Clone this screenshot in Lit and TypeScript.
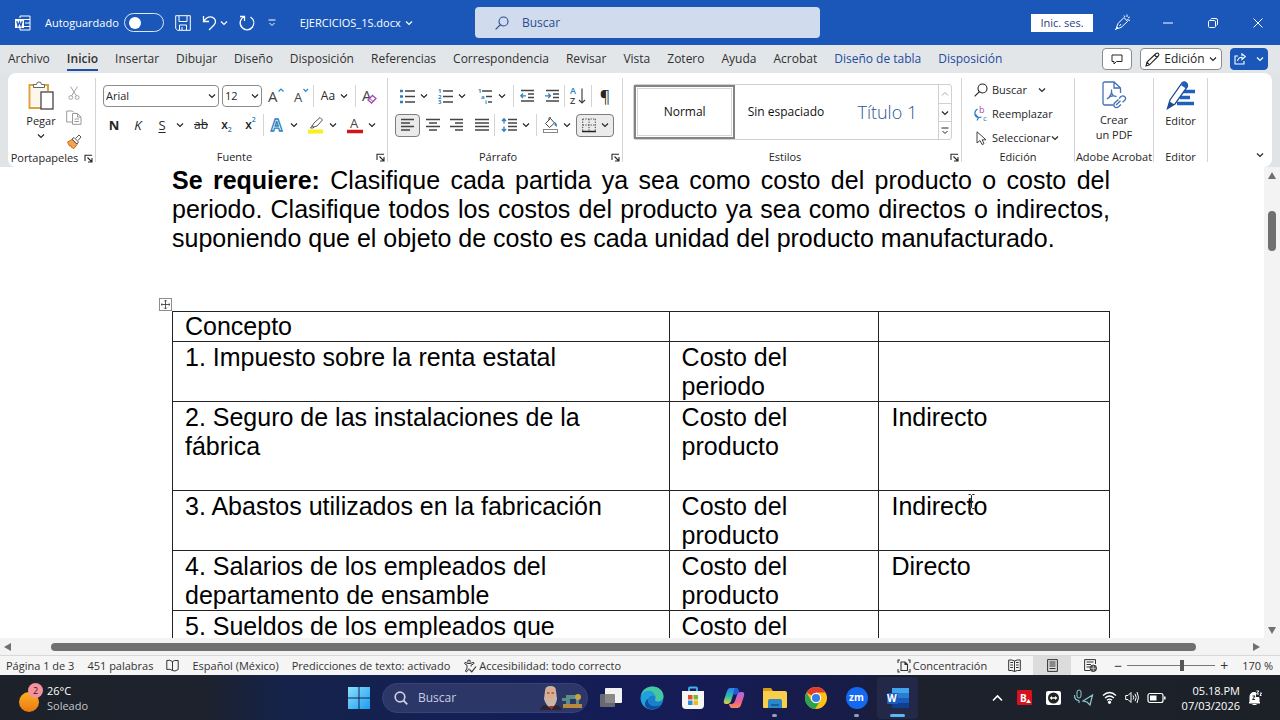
import { LitElement, html, svg, css, nothing } from "lit";
import { customElement } from "lit/decorators.js";
import { classMap } from "lit/directives/class-map.js";

const icon = (w: number, h: number, body: unknown, cls = "") =>
  html`<svg class=${"ic " + cls} width=${w} height=${h} viewBox="0 0 ${w} ${h}" fill="none" stroke="currentColor" aria-hidden="true">${body}</svg>`;

const chev = () => icon(8, 6, svg`<path d="M1 1.5 4 4.5 7 1.5" stroke-width="1.2"/>`);
const launcher = () =>
  icon(9, 9, svg`<path d="M1 7V1.200H8M3.500 3.500 7.500 7.500M8 4V8H4" stroke-width="1.100"/>`);

const lines = (ys: number[][]) => svg`${ys.map(([x1, x2, y]) => svg`<path d=${`M${x1} ${y}H${x2}`} stroke="#444" stroke-width="1.300"/>`)}`;

const I = {
  word: () => icon(16, 16, svg`<path d="M5 3V1H15V15H5V13M9 4.500H15M10 8H15M9 11.500H15"/><rect x="0" y="4" width="9" height="9" fill="#fff" stroke="none"/><path d="M1.800 6 3 11 4.500 7 6 11 7.200 6" stroke="#1a57b8" stroke-width="1.200"/>`),
  save: () => icon(16, 16, svg`<path d="M.7.7H15.300V15.300H2.500L.7 13.500ZM4 1V6.500H12V1M4.500 15V10H11.500V15M7 12V15"/>`),
  undo: () => icon(15, 16, svg`<path d="M1.500 1V6.500H7M1.500 6.500C4 3 7 1.200 10 2.200 14 3.600 14.500 7.500 12 10L7 15" stroke-width="1.300"/>`),
  redo: () => icon(16, 16, svg`<path d="M1 1.500H5.500V6M5.500 1.500C1 3.500-.3 9 3 12.500 6 15.800 11 15.500 13.500 12 15.800 8.500 15 4.500 11.500 2" stroke-width="1.300"/>`),
  custom: () => icon(8, 8, svg`<path d="M.5 1H7.500M1.500 4 4 6.500 6.500 4"/>`),
  search: () => icon(14, 14, svg`<circle cx="8.500" cy="5.500" r="4.500" stroke-width="1.100"/><path d="M5.200 8.800.6 13.400" stroke-width="1.200"/>`),
  pen: () => icon(17, 17, svg`<path d="M2 15 4 9.500 10 3.500 13.500 7.500 7 13.500ZM1 16 4 13M7 10 5.500 12M10 1.500 11 3M13 .5V3M15.800 3 14 4M13 5.500 16 6.500"/>`),
  min: () => icon(10, 10, svg`<path d="M0 5H10"/>`),
  restore: () => icon(10, 10, svg`<rect x=".5" y="2.500" width="7" height="7" rx="1.200"/><path d="M2.500 1.500Q3 .5 4 .5H8Q9.500.5 9.500 2V6Q9.500 7 8.500 7.500"/>`),
  close: () => icon(10, 10, svg`<path d="M.5.5 9.500 9.500M9.500.5.5 9.500"/>`),
  comment: () => icon(12, 11, svg`<path d="M1 1H11V7.500H5.500L3 10V7.500H1Z"/>`),
  pencil: () => icon(15, 15, svg`<path d="M1 14 2 10 11 1.500Q12.500.5 13.500 1.600 14.500 2.700 13.300 4L4.500 12.800ZM9.500 3 12 5.500M2 10 4.500 12.800" stroke-width="1.100"/>`),
  share: () => icon(12, 12, svg`<path d="M4 3H1V11H10V8M3.500 8C4 5.500 5.500 4.200 8 4.200V6.500L11.300 3.500 8 .8V3" stroke-width="1.100"/>`),
  paste: () => icon(26, 29, svg`<path d="M6 4H1.500V27H13M16 4H20V10" stroke="#e0a03c" stroke-width="2"/><path d="M3 6V25H12V11H19V6Z" fill="#fdf6ea" stroke="none"/><path d="M5.500 6.500V3.500H8.500Q8.500 1 11 1T13.500 3.500H16.500V6.500Z" fill="#fff" stroke="#666"/><rect x="13" y="11" width="12" height="17" fill="#fff" stroke="#444" stroke-width="1.300"/>`),
  cut: () => icon(12, 14, svg`<g stroke="#a3a3a3"><path d="M2.500.5 8.500 10M9.500.5 3.500 10"/><circle cx="2.800" cy="11.500" r="1.900"/><circle cx="9.200" cy="11.500" r="1.900"/></g>`),
  copy: () => icon(16, 15, svg`<g stroke="#9a9a9a"><path d="M6 12H.7V1H6.500L8 2.500"/><path d="M6.500 3.500H11.500L15 7V14.300H6.500ZM11.500 3.500V7H15M8.500 9H13M8.500 11.500H13"/></g>`),
  brush: () => icon(16, 15, svg`<path d="M1.500 8 6 5.500 11 10.500 8 14.500 5.500 13.500 5 11.500 3.500 12Z" fill="#f4a44c" stroke="#c96f1b"/><path d="M6 5 8 3.500 12.500 8 11 10ZM9.500 4.500 13 1 15 3 12 6.500" fill="#fff" stroke="#555"/>`),
  grow: () => icon(16, 18, svg`<text x="0" y="15" class="g16">A</text><path d="M10.500 4.500 13 2 15.500 4.500" stroke="#2b88c9" stroke-width="1.200"/>`),
  shrink: () => icon(16, 18, svg`<text x="1" y="15" class="g14">A</text><path d="M10.500 2 12.700 4.300 14.900 2" stroke="#2b88c9" stroke-width="1.200"/>`),
  clear: () => icon(16, 18, svg`<text x="1" y="14" class="g16">A</text><path d="M7 13 11.500 8.500 15 11.500 10.500 16Z" fill="#fff" stroke="#a24bb5" stroke-width="1.300"/><path d="M8.800 11.500 12 14.500" stroke="#a24bb5"/>`),
  effects: () => icon(16, 18, svg`<text x="2" y="15" class="gfx">A</text>`),
  marker: () => icon(16, 18, svg`<path d="M4 10 6 7 12 1.500 14.500 4 9 10 6 11ZM4 10 2.500 12H5L6 11" fill="#fff" stroke="#555"/><path d="M0 15.500H15" stroke="#f7f01b" stroke-width="4"/>`),
  fcolor: () => icon(16, 18, svg`<text x="3" y="12" class="g14">A</text><path d="M0 15.500H16" stroke="#d01616" stroke-width="3.600"/>`),
  bullets: () => icon(15, 16, svg`<path d="M0 3H3M0 8.500H3M0 14H3" stroke="#2b7fc0" stroke-width="2.600"/>${lines([[5, 15, 3], [5, 15, 8.5], [5, 15, 14]])}`),
  numbers: () => icon(15, 16, svg`<text x="0" y="5" class="g6">1</text><text x="0" y="10.500" class="g6">2</text><text x="0" y="16" class="g6">3</text>${lines([[5, 15, 3], [5, 15, 8.5], [5, 15, 14]])}`),
  multi: () => icon(15, 16, svg`<text x="0" y="5" class="g6">1</text><text x="3" y="10.500" class="g6">a</text><text x="7" y="16" class="g6">i</text>${lines([[4, 14, 3], [8, 14, 8.5], [10, 14, 14]])}`),
  outdent: () => icon(14, 14, svg`${lines([[1, 14, 1.5], [8, 14, 5], [8, 14, 8.5], [1, 14, 12]])}<path d="M6 6.800H.8M3 4.500.8 6.800 3 9" stroke="#2b7fc0" stroke-width="1.200"/>`),
  indent: () => icon(14, 14, svg`${lines([[1, 14, 1.5], [8, 14, 5], [8, 14, 8.5], [1, 14, 12]])}<path d="M0 6.800H5.500M3.300 4.500 5.500 6.800 3.300 9" stroke="#2b7fc0" stroke-width="1.200"/>`),
  sort: () => icon(16, 18, svg`<text x="0" y="7" class="gblue">A</text><text x="0" y="17" class="gdark">Z</text><path d="M12 1.500V16M9 13 12 16 15 13" stroke="#444" stroke-width="1.200"/>`),
  left: () => icon(14, 14, lines([[0, 13, 1.5], [0, 9, 5], [0, 13, 8.5], [0, 9, 12]])),
  center: () => icon(14, 14, lines([[0, 14, 1.5], [3, 11, 5], [0, 14, 8.5], [3, 11, 12]])),
  right: () => icon(14, 14, lines([[0, 13, 1.5], [5, 13, 5], [0, 13, 8.5], [5, 13, 12]])),
  just: () => icon(14, 14, lines([[0, 14, 1.5], [0, 14, 5], [0, 14, 8.5], [0, 14, 12]])),
  spacing: () => icon(16, 14, svg`<path d="M3 .8V5.500M1 3 3 .8 5 3M3 8.500V13.200M1 11 3 13.200 5 11" stroke="#2b7fc0" stroke-width="1.300"/>${lines([[7, 16, 1.5], [7, 16, 5], [7, 16, 8.5], [7, 16, 12]])}`),
  bucket: () => icon(15, 16, svg`<path d="M2.500 6.500 7.500 1.500 11.500 6 6.500 10.500ZM6 3V.8H8" stroke="#444"/><path d="M11.500 5Q14.500 6 13.800 10L11.500 8Z" fill="#2b7fc0" stroke="none"/><rect x=".5" y="12.500" width="14" height="3" stroke="#888" fill="#fff"/>`),
  borders: () => icon(14, 15, svg`<path d="M.7 1H14M.7 7H14M.7 1V13M7 1V13M13.300 1V13" stroke="#444" stroke-dasharray="1.300 1.300"/><path d="M0 13.500H14" stroke="#222" stroke-width="1.600"/>`),
  replace: () => icon(14, 16, svg`<text x="5" y="7" class="gpur">b</text><text x="9" y="15" class="gcy">c</text><path d="M3.500 3C0 5 0 10 3.500 11.500M1.500 8.500 4.500 11.600 7.500 11M4.500 11.600 3 14.500" stroke="#2b7fc0" stroke-width="1.200"/>`),
  select: () => icon(14, 14, svg`<path d="M3 .8V12L6 9.500 8 13.500 10 12.700 8.200 8.800H12Z" stroke="#444"/>`),
  pdf: () => icon(26, 28, svg`<g stroke="#4272b8" stroke-width="1.300"><path d="M12 24H4Q2 24 2 22V3Q2 1 4 1H13L19.500 7V12M13 1V7H19.500"/><path d="M6 18C9 16 11 12 10.500 8.500M10.500 11C11 14 13 15.500 15.500 15.500M7 17C9.500 15 13 14.500 15.500 15.500"/><path d="M18 17.500 20 15.500Q22 14 23.800 15.800T23.500 19.500L21.500 21.300M19.500 19.800 15 24M17.500 18.500 14 21.500Q11.800 23.800 13.500 25.800 15.500 27.500 17.800 25.500L20 23.500"/></g>`),
  editor: () => icon(30, 29, svg`<path d="M17 10.500H29M14 16.500H24M11 22.500H28" stroke="#1f5fbf" stroke-width="3.600"/><path d="M1.500 27.500 4 19 16 2Q18 .2 20 1.500T21.500 5.500L9 23Z" fill="#fff" stroke="#1c4c94" stroke-width="1.300"/><path d="M1.500 27.500 3.500 20.500 8.500 23.500Z" fill="#1c4c94" stroke="none"/><path d="M16.500 2Q18 .2 20 1.500T21.500 5.500L20 7.500 15 4.200Z" fill="#1f5fbf" stroke="none"/>`),
  move: () => icon(13, 13, svg`<rect x=".5" y=".5" width="12" height="12" fill="#fff" stroke="#8d8d8d"/><path d="M6.500 2V11M2 6.500H11M5.300 3.300 6.500 2 7.700 3.300M5.300 9.700 6.500 11 7.700 9.700M3.300 5.300 2 6.500 3.300 7.700M9.700 5.300 11 6.500 9.700 7.700" stroke="#444" stroke-width=".9"/>`),
  beam: () => icon(7, 15, svg`<path d="M.5.500H2.500L3.500 1.500 4.500.5H6.500M3.500 1.500V13.500M.5 14.500H2.500L3.500 13.500 4.500 14.500H6.500" stroke="#222"/>`),
  book: () => icon(13, 13, svg`<path d="M6.500 2.500Q4 .5.800 1.500V10.500Q4 9.500 6.500 11.500V2.500Q8 1 12.200 1.500V10.500L9 12 6.500 11.500"/>`),
  access: () => icon(14, 14, svg`<path d="M5 3.500Q4 1 6 1T7 3.500M2 5Q1 4 2.200 3.300L5 4.500H7L10.500 3.300Q11.700 4 10.500 5L8 6.200V7.500M2 5 4 6.200V9L2.500 12Q3 13.500 4 12.500L6 9.500"/><path d="M6.500 10.500 8.800 12.800 13 7.500" stroke-width="1.200"/>`),
  focus: () => icon(14, 14, svg`<path d="M3 1H1V4M1 10V13H3M11 1H13V4M13 10V13H11M4 3H8L10.500 5.500V11.500H4ZM8 3V5.500H10.500" stroke-width="1.100"/>`),
  read: () => icon(13, 13, svg`<path d="M6.500 2Q4 .5.700 1V11.500Q4 11 6.500 12.500 9 11 12.300 11.500V1Q9 .5 6.500 2V12.500M2.300 3.500H5M2.300 6H5M2.300 8.500H5M8 3.500H10.700M8 6H10.700M8 8.500H10.700"/>`),
  print: () => icon(11, 13, svg`<path d="M.6.6H10.400V12.400H.6ZM2.500 3H8.500M2.500 5H8.500M2.500 7H8.500M2.500 9.500H8.500"/>`),
  web: () => icon(13, 13, svg`<path d="M6 11.500H.6V.6H11.500V5M2.500 3H9.500M2.500 5.500H7M2.500 8H6"/><circle cx="9.300" cy="9.300" r="3.200" fill="#555"/><path d="M9.300 6.500V12M6.500 9.300H12" stroke="#ddd" stroke-width=".7"/>`),
};

@customElement("app-root")
export class AppRoot extends LitElement {
  static styles = css`
    :host { display: flex; flex-direction: column; height: 100vh; overflow: hidden; font-family: "Open Sans", "Noto Sans", sans-serif; font-size: 12px; line-height: 16px; color: #262626; background: #fff; }
    * { box-sizing: border-box; }
    button { font: inherit; color: inherit; background: none; border: 0; padding: 0; margin: 0; display: flex; align-items: center; justify-content: center; white-space: nowrap; }
    a { color: inherit; text-decoration: none; }
    .ic { display: block; flex: none; overflow: visible; }
    svg text { stroke: none; fill: #444; font-family: "Open Sans", sans-serif; }
    svg .g16 { font-size: 15px; } svg .g14 { font-size: 13px; }
    svg .gfx { font-size: 16px; font-weight: 700; fill: #fff; stroke: #2b7fc0; stroke-width: 1.300px; }
    svg .g6 { font-size: 6px; font-weight: 700; fill: #2b7fc0; }
    svg .gblue { font-size: 9px; font-weight: 600; fill: #2b7fc0; }
    svg .gdark { font-size: 9px; font-weight: 600; }
    svg .gpur { font-size: 9px; fill: #a24bb5; } svg .gcy { font-size: 8px; fill: #2b7fc0; }

    .title { flex: none; height: 45px; display: grid; grid-template-columns: 475px minmax(120px, 345px) 1fr; align-items: center; background: #1a57b8; color: #fff; }
    .quick { display: flex; align-items: center; gap: 11px; padding-left: 15px; }
    .auto { display: flex; align-items: center; gap: 5px; font-size: 11px; font-weight: 500; padding-left: 3px; }
    .toggle { appearance: none; margin: 0; width: 40px; height: 19px; border: 1px solid #dce7f7; border-radius: 10px; display: flex; align-items: center; padding-left: 4px; }
    .toggle::before { content: ""; width: 12px; height: 12px; border-radius: 50%; background: #fff; }
    .undo { gap: 3px; }
    .more { width: 12px; }
    .file { gap: 4px; padding-left: 11px; font-size: 11px; }
    .find { display: flex; align-items: center; height: 31px; gap: 13px; padding-left: 20px; border-radius: 4px; background: #d0dcee; color: #2c4b8e; }
    .find input { flex: 1; min-width: 0; border: 0; background: none; padding: 0; font: inherit; color: inherit; outline: 0; }
    .find input::placeholder, .tsearch input::placeholder { color: inherit; opacity: 1; }
    .wins { display: flex; align-items: center; justify-content: flex-end; }
    .sign { width: 62px; height: 18px; background: #fff; color: #1d3f86; font-size: 11px; margin-right: 7px; }
    .wins .w { width: 45px; height: 32px; }

    .tabs { flex: none; height: 28px; display: flex; align-items: center; gap: 17px; padding: 0 12px 0 8px; background: #e3e6e9; color: #303030; }
    .tabs a { line-height: 20px; border-bottom: 2px solid transparent; margin-top: 2px; white-space: nowrap; }
    .tabs a.on { font-weight: 600; border-color: #1f4fa6; }
    .tabs a.ctx { color: #234a9c; }
    .acts { margin-left: auto; display: flex; gap: 8px; }
    .acts button { height: 22px; border: 1px solid #8b8b8b; border-radius: 4px; background: #fff; color: #262626; }
    .acts .c { width: 30px; } .acts .e { width: 82px; gap: 4px; } 
    .acts .s { width: 38px; gap: 10px; background: #1a57b8; border-color: #1a57b8; color: #fff; }

    .band { flex: none; background: #e0e4e7; padding: 0 8px; }
    .ribbon { height: 94px; display: flex; background: #fff; border-radius: 8px; padding: 5px 0; overflow: hidden; }
    .grp { flex: none; display: flex; flex-direction: column; justify-content: space-between; height: 84px; border-right: 1px solid #d4d4d4; font-size: 11px; }
    .foot { display: flex; align-items: center; height: 10px; font-size: 11px; line-height: 14px; }
    .foot span { flex: 1; text-align: center; white-space: nowrap; }
    .foot button { width: 14px; }
    .clip { width: 88px; } .font { width: 292px; } .para { width: 235px; } .sty { width: 339px; } .edit { width: 113px; } .adobe { width: 79px; } .edr { width: 54px; }
    .clipbody { display: grid; grid-template-columns: 52px 14px; padding: 3px 0 0 7px; }
    .big { flex-direction: column; justify-content: flex-start; line-height: 15px; white-space: normal; }
    .big .lab { margin-top: 3px; }
    .big .ic + .lab + .ic { margin-top: 5px; }
    .stack button { height: 24px; width: 100%; }
    .rows { display: grid; row-gap: 5px; padding: 6px 0 0 7px; }
    .row { display: grid; height: 24px; align-items: center; }
    .row button { height: 24px; gap: 5px; }
    .f1 { grid-template-columns: 119px 41px 26px 24px 1px 41px 1px 26px; }
    .f2 { grid-template-columns: 22px 26px 22px 14px 28px 23px 25px 1px 39px 39px 39px; font-size: 13px; }
    .row .aa { font-size: 12px; }
    .p1 { grid-template-columns: 38px 38px 42px 1px 25px 25px 1px 26px 1px 26px; }
    .p2 { grid-template-columns: 25px 25px 24px 25px 1px 41px 1px 39px 38px; }
    .sep { height: 22px; background: #d4d4d4; }
    .combo { display: grid; grid-template-columns: 1fr; align-items: center; margin-right: 3px; }
    .combo.sz { margin-right: 1px; }
    .combo select, .combo .ic { grid-area: 1 / 1; }
    .combo .ic { justify-self: end; margin-right: 3px; pointer-events: none; }
    .combo select { appearance: none; width: 100%; height: 22px; border: 1px solid #8b8b8b; border-radius: 4px; background: #fff; font: inherit; color: inherit; padding: 0 2px; }
    .row button.on { border: 1px solid #7d7d7d; border-radius: 4px; background: #ebebeb; height: 23px; }
    .row .p-mark { font-size: 16px; }
    .b { font-weight: 700; } .i { font-style: italic; } .u { text-decoration: underline; text-underline-offset: 2px; } .row .st { text-decoration: line-through; font-size: 12px; }
    .row .xs { gap: 0; font-weight: 600; font-size: 12px; }
    .xs small { font-size: 7px; color: #2b7fc0; line-height: 8px; align-self: flex-end; padding-bottom: 3px; }
    .xs small.up { align-self: flex-start; padding: 3px 0 0; }
    .gal { display: grid; grid-template-columns: repeat(3, 1fr) 13px; height: 56px; margin: 6px 9px 0 10px; border: 1px solid #d0d0d0; border-radius: 3px; font-size: 12px; }
    .gal > button { height: 100%; color: #111; }
    .gal > button.on { border: 2px solid #848484; outline: 1px solid #d6d6d6; outline-offset: -4px; }
    .gal > button.h1 { font-weight: 300; font-size: 18px; color: #2b5596; }
    .gal .scr { display: grid; grid-template-rows: repeat(3, 1fr); border-left: 1px solid #d0d0d0; }
    .scr button + button { border-top: 1px solid #d0d0d0; }
    .scr .dim { color: #aaa; }
    .eds { padding: 0 0 0 12px; }
    .eds button { height: 24px; gap: 4px; }
    .eds .gap { gap: 11px; } .eds .gap span { margin-left: -7px; }
    .eds .near { gap: 1px; } .eds .near span { margin-left: 3px; }
    .tall { padding-top: 3px; display: flex; justify-content: center; }
    .fold { margin: auto 8px 4px auto; }

    .work { flex: 1; min-height: 0; display: grid; grid-template-columns: minmax(0, 1fr) 16px; }
    .doc { overflow: hidden; padding: 0 154px 0 172px; font: 25px/29px "Liberation Sans", Arial, sans-serif; color: #000; }
    .page { position: relative; margin-top: -1px; }
    .page p { margin: 0 0 58px; text-align: justify; }
    table { width: 100%; border-collapse: collapse; table-layout: fixed; }
    .c1 { width: 53%; } .c2 { width: 22.400%; }
    th, td { border: 1px solid #222; padding: 1px 8px 0 12px; text-align: left; vertical-align: top; font-weight: 400; height: 30px; }
    th { padding-top: 0; }
    .tall-row td { height: 89px; }
    .handle { position: absolute; left: -13px; top: 132px; }
    .beam { position: absolute; left: 796px; top: 328px; }
    .vs { display: flex; flex-direction: column; align-items: center; justify-content: space-between; padding: 5px 0 4px; background: #f3f3f3; color: #707070; }
    .vs i { width: 8px; height: 40px; border-radius: 4px; background: #707070; margin: 32px 0 auto; }
    .tri path, .tri { fill: #707070; stroke: none; }
    .hs { flex: none; height: 17px; display: flex; align-items: center; justify-content: space-between; padding: 0 20px 0 4px; background: #f3f3f3; }
    .hs i { flex: 1; height: 8px; border-radius: 4px; background: #707070; margin: 0 56px 0 39px; }

    .status { flex: none; height: 20px; display: flex; align-items: center; justify-content: space-between; background: #f5f5f5; border-top: 1px solid #d8d8d8; font-size: 11px; color: #333; padding: 0 7px 0 6px; }
    .status div { display: flex; align-items: center; height: 100%; }
    .sl { gap: 13px; } .sl button, .sr .fo { gap: 2px; }
    .sr .fo { margin-right: 8px; }
    .sr .v { width: 38px; height: 100%; }
    .sr .v.on { background: #dcdcdc; }
    .sr .z { width: 18px; font-size: 14px; }
    .sr input { appearance: none; width: 88px; height: 14px; margin: 0; background: linear-gradient(#777, #777) center / 100% 1px no-repeat; }
    .sr input::-webkit-slider-thumb { appearance: none; width: 4px; height: 11px; background: #555; }
    .pct { margin-left: 9px; white-space: nowrap; }

    .task { flex: none; height: 45px; display: grid; grid-template-columns: 340px auto 1fr; align-items: center; color: #fff; background: linear-gradient(90deg, #1d2129 0, #1d222d 16%, #15234a 22%, #141f56 38%, #161b55 55%, #171c48 66%, #1c212c 72%, #1c2128); }
    .weather { display: flex; align-items: center; gap: 4px; padding-left: 19px; font-size: 11px; line-height: 15px; }
    .weather span { color: #c3c6cc; }
    .apps { display: flex; align-items: center; }
    .apps button { position: relative; width: 41px; height: 42px; }
    .apps .start { width: 38px; }
    .apps .tv { margin-left: 2px; }
    .tsearch { width: 206px; height: 30px; margin: 0 0 0 4px; display: flex; align-items: center; gap: 10px; padding: 0 5px 0 11px; border-radius: 15px; background: #2c3768; border: 1px solid #37427a; color: #c9cde0; }
    .tsearch input { flex: 1; min-width: 0; border: 0; background: none; font: inherit; color: inherit; padding: 0; outline: 0; }
    .apps .run::after { content: ""; position: absolute; bottom: 2px; width: 5px; height: 3px; border-radius: 2px; background: #9a9db5; }
    .apps .act { background: #232848; border-radius: 4px; }
    .apps .act::after { width: 15px; background: #5cb8f0; }
    .tray { display: flex; align-items: center; justify-content: flex-end; gap: 8px; padding-right: 18px; }
    .tray .up { margin-right: 6px; }
    .clock { text-align: right; font-size: 11px; line-height: 15px; margin-left: 8px; }
    svg text.wt { fill: #fff; font-weight: 700; font-size: 10px; }
    svg text.dk { fill: #222; font-size: 9px; }
  `;

  private tabs = ["Archivo", "Inicio", "Insertar", "Dibujar", "Diseño", "Disposición", "Referencias", "Correspondencia", "Revisar", "Vista", "Zotero", "Ayuda", "Acrobat", "Diseño de tabla", "Disposición"];
  private rows = [
    ["1. Impuesto sobre la renta estatal", "Costo del periodo", ""],
    ["2. Seguro de las instalaciones de la fábrica", "Costo del producto", "Indirecto"],
    ["3. Abastos utilizados en la fabricación", "Costo del producto", "Indirecto"],
    ["4. Salarios de los empleados del departamento de ensamble", "Costo del producto", "Directo"],
    ["5. Sueldos de los empleados que", "Costo del", ""],
  ];

  private btn(label: string, body: unknown, cls = "") {
    return html`<button class=${cls} aria-label=${label}>${body}</button>`;
  }
  private split(label: string, body: unknown, cls = "") {
    return html`<button class=${cls} aria-label=${label}>${body}${chev()}</button>`;
  }
  private foot(label: string, more = true) {
    return html`<div class="foot"><span>${label}</span>${more ? html`<button aria-label=${"Más opciones de " + label}>${launcher()}</button>` : nothing}</div>`;
  }

  private renderTitle() {
    return html`<header class="title">
      <div class="quick">
        ${I.word()}
        <label class="auto">Autoguardado <input class="toggle" type="checkbox"></label>
        ${this.btn("Guardar", I.save())}
        ${this.split("Deshacer", I.undo(), "undo")}
        ${this.btn("Rehacer", I.redo())}
        ${this.btn("Personalizar", I.custom(), "more")}
        <button class="file">EJERCICIOS_1S.docx ${chev()}</button>
      </div>
      <label class="find">${I.search()}<input type="search" placeholder="Buscar" aria-label="Buscar"></label>
      <div class="wins">
        <button class="sign">Inic. ses.</button>
        ${this.btn("Lápiz", I.pen(), "w")}${this.btn("Minimizar", I.min(), "w")}${this.btn("Restaurar", I.restore(), "w")}${this.btn("Cerrar", I.close(), "w")}
      </div>
    </header>`;
  }

  private renderTabs() {
    return html`<nav class="tabs">
      ${this.tabs.map((t, i) => html`<a href="#" class=${classMap({ on: i === 1, ctx: i > 12 })}>${t}</a>`)}
      <div class="acts">
        ${this.btn("Comentarios", I.comment(), "c")}
        <button class="e">${I.pencil()}Edición${chev()}</button>
        ${this.split("Compartir", I.share(), "s")}
      </div>
    </nav>`;
  }

  private renderRibbon() {
    const sep = html`<i class="sep"></i>`;
    return html`<div class="band"><div class="ribbon">
      <section class="grp clip">
        <div class="clipbody">
          <button class="big">${I.paste()}<span class="lab">Pegar</span>${chev()}</button>
          <div class="stack">${this.btn("Cortar", I.cut())}${this.btn("Copiar", I.copy())}${this.btn("Copiar formato", I.brush())}</div>
        </div>
        ${this.foot("Portapapeles")}
      </section>
      <section class="grp font">
        <div class="rows">
          <div class="row f1">
            <label class="combo"><select aria-label="Fuente"><option>Arial</option></select>${chev()}</label>
            <label class="combo sz"><select aria-label="Tamaño de fuente"><option>12</option></select>${chev()}</label>
            ${this.btn("Aumentar", I.grow())}${this.btn("Disminuir", I.shrink())}${sep}
            <button class="aa">Aa${chev()}</button>${sep}
            ${this.btn("Borrar formato", I.clear())}
          </div>
          <div class="row f2">
            <button class="b">N</button><button class="i">K</button><button class="u">S</button>${this.btn("Subrayado", chev())}
            <button class="st">ab</button>
            <button class="xs">x<small>2</small></button><button class="xs">x<small class="up">2</small></button>${sep}
            ${this.split("Efectos", I.effects())}${this.split("Resaltado", I.marker())}${this.split("Color", I.fcolor())}
          </div>
        </div>
        ${this.foot("Fuente")}
      </section>
      <section class="grp para">
        <div class="rows">
          <div class="row p1">
            ${this.split("Viñetas", I.bullets())}${this.split("Numeración", I.numbers())}${this.split("Multinivel", I.multi())}${sep}
            ${this.btn("Disminuir sangría", I.outdent())}${this.btn("Aumentar sangría", I.indent())}${sep}
            ${this.btn("Ordenar", I.sort())}${sep}<button class="p-mark">¶</button>
          </div>
          <div class="row p2">
            ${this.btn("Izquierda", I.left(), "on")}${this.btn("Centrar", I.center())}${this.btn("Derecha", I.right())}${this.btn("Justificar", I.just())}${sep}
            ${this.split("Espaciado", I.spacing())}${sep}${this.split("Sombreado", I.bucket())}${this.split("Bordes", I.borders(), "on")}
          </div>
        </div>
        ${this.foot("Párrafo")}
      </section>
      <section class="grp sty">
        <div class="gal">
          <button class="on">Normal</button><button>Sin espaciado</button><button class="h1">Título 1</button>
          <div class="scr">
            ${this.btn("Subir", icon(8, 6, svg`<path d="M1 4.500 4 1.500 7 4.500"/>`), "dim")}${this.btn("Bajar", chev())}${this.btn("Más", I.custom())}
          </div>
        </div>
        ${this.foot("Estilos")}
      </section>
      <section class="grp edit">
        <div class="eds">
          <button class="gap">${I.search()}<span>Buscar</span>${chev()}</button>
          <button>${I.replace()}Reemplazar</button>
          <button class="near">${I.select()}<span>Seleccionar</span>${chev()}</button>
        </div>
        ${this.foot("Edición", false)}
      </section>
      <section class="grp adobe">
        <div class="tall"><button class="big">${I.pdf()}<span class="lab">Crear<br>un PDF</span></button></div>
        ${this.foot("Adobe Acrobat", false)}
      </section>
      <section class="grp edr">
        <div class="tall"><button class="big">${I.editor()}<span class="lab">Editor</span></button></div>
        ${this.foot("Editor", false)}
      </section>
      ${this.btn("Contraer la cinta", chev(), "fold")}
    </div></div>`;
  }

  private renderDoc() {
    return html`<main class="work">
      <div class="doc"><div class="page">
        <p><b>Se requiere:</b> Clasifique cada partida ya sea como costo del producto o costo del periodo. Clasifique todos los costos del producto ya sea como directos o indirectos, suponiendo que el objeto de costo es cada unidad del producto manufacturado.</p>
        <table>
          <colgroup><col class="c1"><col class="c2"><col></colgroup>
          <thead><tr><th>Concepto</th><th></th><th></th></tr></thead>
          <tbody>${this.rows.map((r, i) => html`<tr class=${classMap({ "tall-row": i === 1 })}>${r.map((c) => html`<td>${c}</td>`)}</tr>`)}</tbody>
        </table>
        <span class="handle">${I.move()}</span><span class="beam">${I.beam()}</span>
      </div></div>
      <div class="vs">${icon(8, 7, svg`<path d="M4 0 8 7H0Z"/>`, "tri")}<i></i>${icon(8, 7, svg`<path d="M0 0H8L4 7Z"/>`, "tri")}</div>
    </main>
    <div class="hs">${icon(8, 8, svg`<path d="M0 4 7 0V8Z"/>`, "tri")}<i></i>${icon(8, 8, svg`<path d="M8 4 1 0V8Z"/>`, "tri")}</div>`;
  }

  private renderStatus() {
    return html`<footer class="status">
      <div class="sl">
        <span>Página 1 de 3</span><span>451 palabras</span>${this.btn("Revisión", I.book())}<span>Español (México)</span><span>Predicciones de texto: activado</span>
        <button>${I.access()}Accesibilidad: todo correcto</button>
      </div>
      <div class="sr">
        <button class="fo">${I.focus()}Concentración</button>
        ${this.btn("Lectura", I.read(), "v")}${this.btn("Impresión", I.print(), "v on")}${this.btn("Web", I.web(), "v")}
        <button class="z">−</button><input type="range" min="0" max="100" value="63" aria-label="Zoom"><button class="z">+</button>
        <span class="pct">170 %</span>
      </div>
    </footer>`;
  }

  private renderTask() {
    return html`<div class="task">
      <div class="weather">
        ${icon(24, 34, svg`<defs><linearGradient id="sun" x2="0" y2="1"><stop stop-color="#fbb024"/><stop offset="1" stop-color="#ec7811"/></linearGradient></defs><circle cx="10" cy="21" r="10" fill="url(#sun)" stroke="none"/><circle cx="16.500" cy="9.500" r="7.500" fill="#f9919c" stroke="none"/><text x="14" y="13" class="dk">2</text>`)}
        <div>26°C<br><span>Soleado</span></div>
      </div>
      <div class="apps">
        ${this.btn("Inicio", icon(22, 22, svg`<g stroke="none"><defs><linearGradient id="win" x2="1" y2="1"><stop stop-color="#8ce0fd"/><stop offset="1" stop-color="#1a9cf0"/></linearGradient></defs><path fill="url(#win)" d="M0 0H10.500V10.500H0ZM11.500 0H22V10.500H11.500ZM0 11.500H10.500V22H0ZM11.500 11.500H22V22H11.500Z"/></g>`), "start")}
        <label class="tsearch">
          ${icon(14, 14, svg`<circle cx="6" cy="6" r="4.800" stroke-width="1.700"/><path d="M9.500 9.500 13.300 13.300" stroke-width="1.800"/>`)}
          <input placeholder="Buscar" aria-label="Buscar en Windows">
          ${icon(44, 26, svg`<g stroke="none"><path d="M2 25Q3 20 9 20H16Q22 20 24 25Z" fill="#2b2533"/><path d="M7 6Q7 1 12.500 1T18 6L19 14Q18 21 13 23 8 21 6 14Z" fill="#c9b6a8"/><path d="M8 6Q9 3 12.500 3T17 6V11Q15 14 12.500 14T8 11Z" fill="#e0a98c"/><path d="M9 8H11.500M13.500 8H16" stroke="#5a4238"/><path d="M11 21H16L13.500 25Z" fill="#a33030"/><rect x="25" y="19" width="19" height="4" fill="#b98a3d"/><path d="M28 19V10H38Q41 10 41 14V19H38V14H32V19ZM24 13H29V16H24Z" fill="#5a8c88"/><circle cx="40" cy="12" r="3" fill="#c7a345"/></g>`)}
        </label>
        ${this.btn("Vista de tareas", icon(22, 22, svg`<g stroke="none"><rect x="5" y="1" width="17" height="15" rx="1" fill="#f2f2f2"/><rect x="0" y="7" width="15" height="13" rx="1" fill="#777" fill-opacity=".85"/></g>`), "tv")}
        ${this.btn("Edge", icon(24, 24, svg`<g stroke="none"><circle cx="12" cy="12" r="11.500" fill="#1b7fd0"/><path d="M1 10C2 4 7 .5 12.500.5 19 .5 23.500 5 23.500 10 23.500 14 20 16 17 15.500 15 15 14.500 14 15.500 12.500 16 9 13 7 9.500 7 5.500 7 2 9 1 10Z" fill="#45c8a0"/><path d="M1 10C4 3 14 3 15.500 10.500 12 7.500 7 11 8 16 8.500 19.500 11 22.500 14 23.200 6 24.500-.5 18 1 10Z" fill="#1fa2dc"/><path d="M8 13C7 19 13 22 20.500 19 17 24 10 25 6 21 4 19 5 14 8 13Z" fill="#0f4f9e"/></g>`))}
        ${this.btn("Store", icon(22, 24, svg`<path d="M7 6V2.500Q7 1.500 8 1.500H14Q15 1.500 15 2.500V6" stroke="#3fb6ea" stroke-width="1.800"/><g stroke="none"><path d="M0 5H22V19Q22 23 18 23H4Q0 23 0 19Z" fill="#f5f5f5"/><path d="M6 9H10.500V13.500H6Z" fill="#e34f2c"/><path d="M11.500 9H16V13.500H11.500Z" fill="#7cb82f"/><path d="M6 14.500H10.500V19H6Z" fill="#2a8ee0"/><path d="M11.500 14.500H16V19H11.500Z" fill="#f5b81c"/></g>`))}
        ${this.btn("Copilot", icon(22, 22, svg`<g stroke="none"><defs><linearGradient id="cpa" x2="0" y2="1"><stop stop-color="#2a7df0"/><stop offset=".5" stop-color="#29bcae"/><stop offset="1" stop-color="#e3d23c"/></linearGradient><linearGradient id="cpb" x2="0" y2="1"><stop stop-color="#a868f0"/><stop offset=".6" stop-color="#ee5f90"/><stop offset="1" stop-color="#f58c55"/></linearGradient></defs><path d="M7 1H13Q15 1 15.500 3L16 5H13Q11 5 10 8L8 14Q7 17 4 17H3Q0 17 1 13L4 4Q5 1 7 1Z" fill="url(#cpa)"/><path d="M12 1Q15 1 15.500 3L16.500 6 12 8 10 6Z" fill="#2358d8"/><path d="M15 21H9Q7 21 6.500 19L6 17H9Q11 17 12 14L14 8Q15 5 18 5H19Q22 5 21 9L18 18Q17 21 15 21Z" fill="url(#cpb)"/></g>`))}
        ${this.btn("Explorador", icon(24, 22, svg`<g stroke="none"><path d="M0 2Q0 1 1 1H8L10 4H0Z" fill="#d99a1b"/><path d="M0 4H22Q24 4 24 6V20Q24 21 23 21H1Q0 21 0 20Z" fill="#fbce4a"/><path d="M5 21V14Q5 12 7 12H17Q19 12 19 14V21Z" fill="#2c87c9"/><path d="M8 17H16V19H8Z" fill="#1a5f99"/></g>`), "run")}
        ${this.btn("Chrome", icon(22, 22, svg`<g stroke="none"><circle cx="11" cy="11" r="11" fill="#fbc116"/><path d="M11 11 1.500 5.500A11 11 0 0 1 20.500 5.500H11Z" fill="#e33b2e"/><path d="M1.500 5.500A11 11 0 0 0 10 22L15.500 13.500 11 11 6.500 14Z" fill="#2ba24c"/><circle cx="11" cy="11" r="5.200" fill="#fff"/><circle cx="11" cy="11" r="4.100" fill="#3b7de8"/></g>`))}
        ${this.btn("Zoom", icon(22, 22, svg`<circle cx="11" cy="11" r="11" fill="#1568f0" stroke="none"/><text x="3" y="14" class="wt">zm</text>`), "run")}
        ${this.btn("Word", icon(22, 22, svg`<g stroke="none"><rect x="5" y="1" width="17" height="5.500" fill="#41a5ee"/><rect x="5" y="6" width="17" height="5" fill="#2b7cd3"/><rect x="5" y="11" width="17" height="5" fill="#185abd"/><rect x="5" y="16" width="17" height="5" fill="#103f91"/><rect x="0" y="6" width="11" height="11" rx="1" fill="#1b5dbe"/></g><text x="0" y="15" class="wt">W</text>`), "run act")}
      </div>
      <div class="tray">
        ${icon(11, 8, svg`<path d="M1 6.500 5.500 2 10 6.500" stroke-width="1.600"/>`, "up")}
        ${icon(15, 15, svg`<rect width="15" height="15" rx="1" fill="#d8121d" stroke="none"/><text x="3" y="12" class="wt">B</text><path d="M9 13 11.500 9 14 13Z" fill="#fff" stroke="none"/>`)}
        ${icon(24, 16, svg`<g stroke="none"><rect x="6" y="1" width="15" height="14" rx="2" fill="#fff"/><circle cx="13.500" cy="8" r="5.500" fill="#222"/><path d="M9.500 8 12 6V7.300H15V6L17.500 8 15 10V8.700H12V10Z" fill="#fff"/></g>`)}
        ${icon(22, 18, svg`<g stroke="#8fc9d0"><rect x="5" y="1" width="4" height="8" rx="2"/><path d="M2.500 6Q2.500 11.500 7 11.500M7 11.500V14M11 12 20.500 6 18 16 15 13Z" stroke-width="1.200"/></g>`)}
        ${icon(15, 13, svg`<path d="M1 4.500Q7.500-1.500 14 4.500M3 7Q7.500 3 12 7M5 9.300Q7.500 7 10 9.300" stroke-width="1.300"/><circle cx="7.500" cy="11.300" r="1.200" fill="#fff"/>`)}
        ${icon(14, 13, svg`<path d="M.7 4.500H3L6 1.500V11.500L3 8.500H.7ZM8 4.500Q9.500 6.500 8 8.500M10 2.800Q12.500 6.500 10 10.200M12 1Q15 6.500 12 12"/>`)}
        ${icon(19, 12, svg`<rect x="1" y="1.500" width="15" height="9" rx="2" stroke-width="1.200"/><rect x="3" y="3.500" width="6.500" height="5" fill="#fff" stroke="none"/><path d="M17.800 4.500V7.500" stroke-width="1.500"/>`)}
        <div class="clock">05.18.PM<br>07/03/2026</div>
        ${icon(14, 16, svg`<path d="M2 12V7Q2 2.500 6 2.500H7.500V7.500H11V12L12 13H1Z" fill="#fff"/><path d="M4.500 14.500H8.500M8.500 1H11L8.500 4H11M12 3H13.500L12 5.500H13.500"/><path d="M4.500 6H7L4.500 9.500H7" stroke="#222"/>`)}
      </div>
    </div>`;
  }

  render() {
    return html`${this.renderTitle()}${this.renderTabs()}${this.renderRibbon()}${this.renderDoc()}${this.renderStatus()}${this.renderTask()}`;
  }
}
